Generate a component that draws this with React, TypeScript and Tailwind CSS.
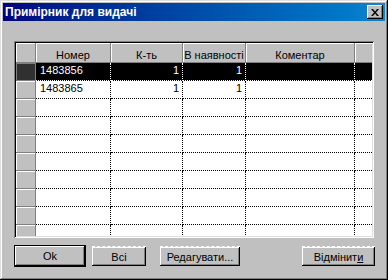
import React from "react";

const raised =
  "shadow-[inset_-1px_-1px_#000000,inset_1px_1px_#ffffff,inset_-2px_-2px_#808080]";

type Row = { num: string; qty: string; avail: string; note: string };

const rows: Row[] = [
  { num: "1483856", qty: "1", avail: "1", note: "" },
  { num: "1483865", qty: "1", avail: "1", note: "" },
  ...Array.from({ length: 8 }, () => ({ num: "", qty: "", avail: "", note: "" })),
];

const cols = "grid grid-cols-[20px_75px_72px_63px_109px_17px]";

const HeadCell = ({ children }: { children?: React.ReactNode }) => (
  <div className="h-[20px] bg-[#c0c0c0] border-r border-b border-[#808080] shadow-[inset_1px_1px_#ffffff] text-center leading-[14px] pt-[5px] overflow-hidden whitespace-nowrap">
    {children}
  </div>
);

const App = () => {
  return (
    <div
      className="w-[388px] h-[280px] bg-[#c0c0c0] p-[3px] flex flex-col shadow-[inset_-1px_-1px_#000000,inset_1px_1px_#dfdfdf,inset_-2px_-2px_#808080,inset_2px_2px_#ffffff] text-[11px] text-black select-none"
      style={{ fontFamily: '"Liberation Sans", Arial, sans-serif' }}
    >
      {/* title bar */}
      <div className="h-[18px] flex items-center justify-between bg-gradient-to-r from-[#000080] to-[#1084d0] pl-[2px] pr-[2px]">
        <span className="text-white font-bold text-[12px] leading-[18px]">Примірник для видачі</span>
        <button className={`w-[16px] h-[14px] bg-[#c0c0c0] flex items-center justify-center ${raised}`}>
          <svg width="8" height="7" viewBox="0 0 8 7">
            <path d="M0 0h2l2 2.5L6 0h2L5 3.5 8 7H6L4 4.5 2 7H0l3-3.5z" fill="#000" />
          </svg>
        </button>
      </div>

      {/* grid */}
      <div className="mt-[20px] ml-[11px] w-[360px] h-[197px] p-[2px] bg-white shadow-[inset_1px_1px_#808080,inset_-1px_-1px_#ffffff,inset_2px_2px_#000000,inset_-2px_-2px_#dfdfdf]">
        <div className="w-[356px] h-[193px] overflow-hidden bg-white">
          <div className={cols}>
            <HeadCell />
            <HeadCell>Номер</HeadCell>
            <HeadCell>К-ть</HeadCell>
            <HeadCell>В наявності</HeadCell>
            <HeadCell>Коментар</HeadCell>
            <div className="h-[20px] bg-[#c0c0c0] border-b border-[#808080] shadow-[inset_1px_1px_#ffffff]" />
          </div>
          {rows.map((r, i) => {
            const sel = i === 0;
            const cell = sel
              ? "h-[18px] bg-black text-white border-r border-b border-dotted border-white leading-[14px] overflow-hidden whitespace-nowrap"
              : "h-[18px] bg-white text-black border-r border-b border-dotted border-black leading-[14px] overflow-hidden whitespace-nowrap";
            return (
              <div key={i} className={cols}>
                <div
                  className={
                    sel
                      ? "h-[18px] bg-[#303030] border-r border-b border-[#808080] shadow-[inset_1px_1px_#808080]"
                      : "h-[18px] bg-[#c0c0c0] border-r border-b border-[#808080] shadow-[inset_1px_1px_#ffffff]"
                  }
                />
                <div className={`${cell} pl-[4px]`}>{r.num}</div>
                <div className={`${cell} text-right pr-[3px]`}>{r.qty}</div>
                <div className={`${cell} text-right pr-[3px]`}>{r.avail}</div>
                <div className={`${cell} pl-[4px]`}>{r.note}</div>
                <div
                  className={
                    sel
                      ? "h-[18px] bg-black border-b border-dotted border-white"
                      : "h-[18px] bg-white border-b border-dotted border-black"
                  }
                />
              </div>
            );
          })}
        </div>
      </div>

      {/* buttons */}
      <div className="mt-[7px] ml-[11px] flex items-start">
        <div className="w-[72px] h-[22px] border border-black">
          <button className={`w-full h-full bg-[#c0c0c0] ${raised} leading-[20px]`}>Ok</button>
        </div>
        <button
          className={`ml-[6px] mt-[1px] w-[54px] h-[20px] bg-[#c0c0c0] ${raised} border-t border-dashed border-white leading-[18px]`}
        >
          Всі
        </button>
        <button
          className={`ml-[14px] mt-[1px] w-[80px] h-[20px] bg-[#c0c0c0] ${raised} border-t border-dashed border-white leading-[18px]`}
        >
          Редагувати...
        </button>
        <button
          className={`ml-[62px] mt-[1px] w-[73px] h-[20px] bg-[#c0c0c0] ${raised} border-t border-dashed border-white leading-[18px]`}
        >
          Відмінит<span className="underline">и</span>
        </button>
      </div>
    </div>
  );
};

export default App;
